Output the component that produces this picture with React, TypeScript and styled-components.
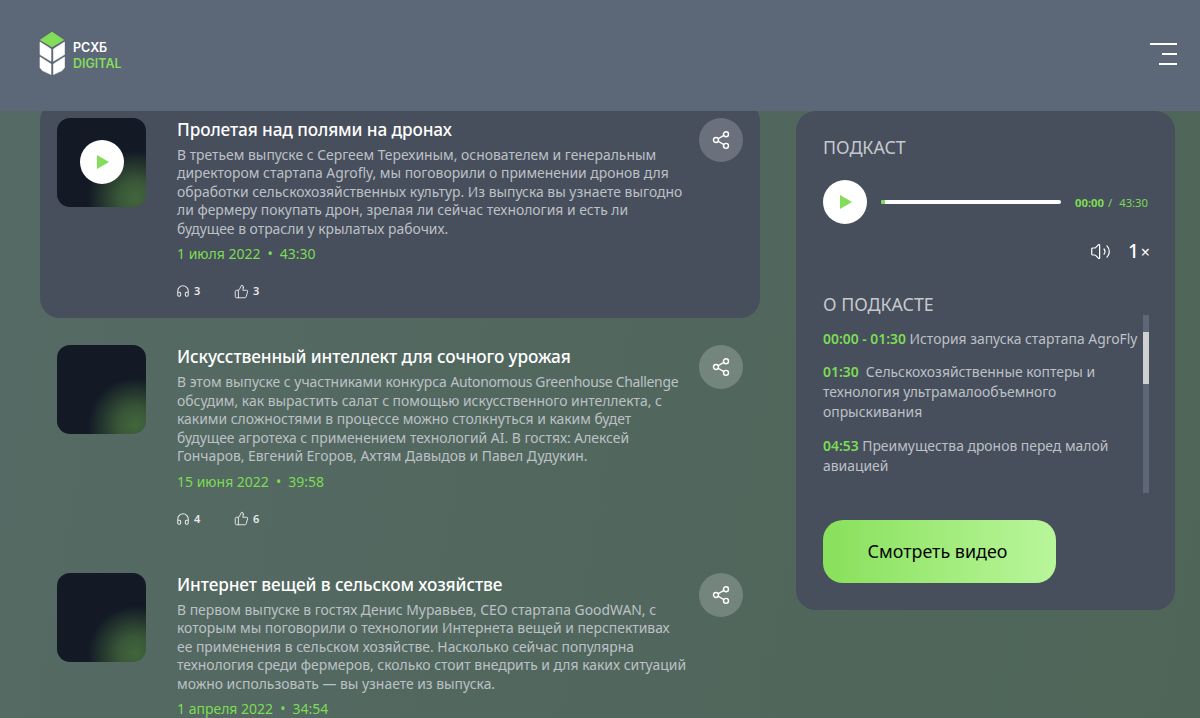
import React from "react";
import styled, { createGlobalStyle } from "styled-components";
import { Headphones, ThumbsUp, Share2, Volume2 } from "lucide-react";

const Global = createGlobalStyle`
  html, body { margin: 0; padding: 0; height: 718px; overflow: hidden; }
  body { font-family: "Noto Sans", "Open Sans", sans-serif; background: #4f665a; }
  * { box-sizing: border-box; }
`;

const Page = styled.div`
  position: relative;
  width: 1200px;
  height: 718px;
  overflow: hidden;
  background: linear-gradient(100deg, #556a64 0%, #4e6558 100%);
`;
const Header = styled.header`
  position: absolute;
  z-index: 5;
  top: 0;
  left: 0;
  right: 0;
  height: 111px;
  display: flex;
  align-items: center;
  justify-content: space-between;
  padding: 0 23px 0 39px;
  background: #5c6778;
`;
const Brand = styled.div`
  display: flex;
  align-items: center;
  gap: 7px;
  margin-top: -4px;
`;
const BrandText = styled.div`
  font-family: "Inter", sans-serif;
  font-size: 12.5px;
  font-weight: 600;
  line-height: 16px;
  color: #fff;
  display: flex;
  flex-direction: column;
  margin-top: 5px;
`;
const BrandAccent = styled.span`
  color: #84dd58;
`;
const Burger = styled.div`
  display: flex;
  flex-direction: column;
  align-items: flex-end;
  gap: 7.5px;
  margin-top: -3px;
`;
const BurgerLine = styled.span<{ $w: number }>`
  display: block;
  height: 2.5px;
  width: ${(p) => p.$w}px;
  background: #fff;
`;
const Main = styled.main`
  display: flex;
  align-items: flex-start;
  padding: 100.6px 25px 0 40px;
  gap: 36px;
`;
const Feed = styled.section`
  width: 720px;
  flex: none;
  display: flex;
  flex-direction: column;
  gap: 10.5px;
`;
const Card = styled.article<{ $active?: boolean }>`
  height: 217px;
  display: flex;
  padding: 17px 17px 0;
  border-radius: 20px;
  background: ${(p) => (p.$active ? "#474e5c" : "transparent")};
`;
const Thumb = styled.div`
  flex: none;
  width: 89px;
  height: 89px;
  border-radius: 13px;
  display: flex;
  align-items: center;
  justify-content: center;
  background:
    radial-gradient(circle at 88% 90%, #42663c 0%, rgba(66, 102, 60, 0.8) 15%, rgba(66, 102, 60, 0) 42%),
    #131a26;
`;
const PlayCircle = styled.button`
  width: 44px;
  height: 44px;
  flex: none;
  border: 0;
  padding: 0 0 0 2px;
  border-radius: 50%;
  background: #fff;
  display: flex;
  align-items: center;
  justify-content: center;
`;
const Body = styled.div`
  flex: none;
  width: 522px;
  margin-left: 31px;
  display: flex;
  flex-direction: column;
`;
const Title = styled.h2`
  margin: 0;
  font-size: 17.2px;
  line-height: 24px;
  font-weight: 500;
  color: #fff;
  white-space: nowrap;
  letter-spacing: -0.1px;
`;
const Desc = styled.p`
  margin: 4px 0 0;
  font-size: 13.9px;
  line-height: 18.5px;
  color: #bdc1c6;
`;
const DescLine = styled.span`
  display: block;
  white-space: nowrap;
`;
const Latin = styled.span`
  letter-spacing: -0.29px;
`;
const Meta = styled.div`
  margin-top: 6px;
  display: flex;
  gap: 7px;
  font-size: 14px;
  line-height: 20px;
  color: #7ddc55;
`;
const Stats = styled.div`
  margin: 19px 0 0 -1px;
  display: flex;
  gap: 21px;
`;
const Stat = styled.span`
  display: flex;
  align-items: center;
  gap: 4px;
  width: 37px;
  font-size: 11px;
  font-weight: 600;
  color: #e8e9eb;
  line-height: 16px;
`;
const ShareBtn = styled.button`
  flex: none;
  width: 44px;
  height: 44px;
  border: 0;
  padding: 0;
  border-radius: 50%;
  background: rgba(255, 255, 255, 0.2);
  display: flex;
  align-items: center;
  justify-content: center;
  color: #fff;
`;
const Side = styled.aside`
  width: 379px;
  height: 499px;
  flex: none;
  margin-top: 10.5px;
  padding: 24px 25px 0 27px;
  border-radius: 20px;
  background: #474e5c;
  display: flex;
  flex-direction: column;
`;
const SideTitle = styled.h3`
  margin: 0;
  font-size: 17.8px;
  line-height: 24px;
  font-weight: 400;
  color: #c6c9ce;
`;
const Player = styled.div`
  margin-top: 21px;
  display: flex;
  align-items: center;
`;
const Progress = styled.div`
  width: 180px;
  height: 4px;
  margin-left: 14px;
  border-radius: 2px;
  background: #fff;
  overflow: hidden;
`;
const ProgressFill = styled.div`
  width: 4px;
  height: 100%;
  background: #7ddc55;
`;
const Time = styled.div`
  margin-left: 14px;
  font-size: 11.3px;
  color: #7ddc55;
  white-space: nowrap;
  display: flex;
  gap: 4px;
`;
const TimeNow = styled.span`
  font-weight: 700;
`;
const Controls = styled.div`
  margin-top: 15px;
  height: 24px;
  display: flex;
  align-items: center;
  justify-content: flex-end;
  gap: 17px;
  color: #fff;
`;
const Speed = styled.span`
  font-size: 19px;
  font-weight: 500;
  line-height: 24px;
`;
const SpeedX = styled.span`
  font-size: 16px;
  font-weight: 400;
  margin-left: 2px;
`;
const AboutTitle = styled(SideTitle)`
  margin-top: 29px;
`;
const AboutWrap = styled.div`
  margin-top: -1px;
  height: 178px;
  display: flex;
  gap: 6px;
`;
const Chapters = styled.div`
  width: 314px;
  padding-top: 14px;
  display: flex;
  flex-direction: column;
  gap: 13.3px;
`;
const Chapter = styled.p`
  margin: 0;
  font-size: 13.9px;
  line-height: 20px;
  color: #bdc1c6;
  white-space: nowrap;
`;
const Stamp = styled.b`
  font-weight: 600;
  color: #7ddc55;
`;
const Track = styled.div`
  width: 6px;
  height: 178px;
  background: #5c6778;
`;
const TrackThumb = styled.div`
  width: 6px;
  height: 52px;
  margin-top: 17px;
  background: #cfd0d2;
`;
const Watch = styled.button`
  margin-top: 27px;
  width: 233px;
  height: 63px;
  border: 0;
  border-radius: 20px;
  background: linear-gradient(90deg, #88e05b 0%, #b9f69b 100%);
  color: #050505;
  font-family: inherit;
  font-size: 17.9px;
  font-weight: 400;
  padding: 0 4px 2px 0;
`;

const Play = () => (
  <svg width="14" height="16" viewBox="0 0 14 16">
    <path d="M1 1v14l12-7z" fill="#84dd58" />
  </svg>
);

const Logo = () => (
  <svg width="27" height="43" viewBox="0 0 27 43">
    <path d="M13 .3l11.5 7.6L13 14.8 1.5 7.9z" fill="#84dd58" stroke="#84dd58" strokeWidth="1" strokeLinejoin="round" />
    <path d="M1 10l11 7v12.2L1 22.6z" fill="#fff" stroke="#fff" strokeWidth=".6" strokeLinejoin="round" />
    <path d="M25.5 10l-11 7v12.2l11-6.6z" fill="#fff" stroke="#fff" strokeWidth=".6" strokeLinejoin="round" />
    <path d="M1 25l11 7v10.6l-8.6-4L1 35.5z" fill="#fff" stroke="#fff" strokeWidth=".6" strokeLinejoin="round" />
    <path d="M25.5 25l-11 7v10.6l8.6-4 2.4-3.1z" fill="#fff" stroke="#fff" strokeWidth=".6" strokeLinejoin="round" />
  </svg>
);

const episodes = [
  {
    title: "Пролетая над полями на дронах",
    lines: [
      "В третьем выпуске с Сергеем Терехиным, основателем и генеральным",
      "директором стартапа Agrofly, мы поговорили о применении дронов для",
      "обработки сельскохозяйственных культур. Из выпуска вы узнаете выгодно",
      "ли фермеру покупать дрон, зрелая ли сейчас технология и есть ли",
      "будущее в отрасли у крылатых рабочих.",
    ],
    date: "1 июля 2022",
    time: "43:30",
    listens: 3,
    likes: 3,
    active: true,
  },
  {
    title: "Искусственный интеллект для сочного урожая",
    lines: [
      <>
        В этом выпуске с участниками конкурса <Latin>Autonomous Greenhouse Challenge</Latin>
      </>,
      "обсудим, как вырастить салат с помощью искусственного интеллекта, с",
      "какими сложностями в процессе можно столкнуться и каким будет",
      "будущее агротеха с применением технологий AI. В гостях: Алексей",
      "Гончаров, Евгений Егоров, Ахтям Давыдов и Павел Дудукин.",
    ],
    date: "15 июня 2022",
    time: "39:58",
    listens: 4,
    likes: 6,
  },
  {
    title: "Интернет вещей в сельском хозяйстве",
    lines: [
      "В первом выпуске в гостях Денис Муравьев, CEO стартапа GoodWAN, с",
      "которым мы поговорили о технологии Интернета вещей и перспективах",
      "ее применения в сельском хозяйстве. Насколько сейчас популярна",
      "технология среди фермеров, сколько стоит внедрить и для каких ситуаций",
      "можно использовать — вы узнаете из выпуска.",
    ],
    date: "1 апреля 2022",
    time: "34:54",
    listens: 2,
    likes: 4,
  },
];

export default function App() {
  return (
    <Page>
      <Global />
      <Header>
        <Brand>
          <Logo />
          <BrandText>
            <span>РСХБ</span>
            <BrandAccent>DIGITAL</BrandAccent>
          </BrandText>
        </Brand>
        <Burger>
          <BurgerLine $w={27} />
          <BurgerLine $w={15} />
          <BurgerLine $w={18} />
        </Burger>
      </Header>
      <Main>
        <Feed>
          {episodes.map((e) => (
            <Card key={e.title} $active={e.active}>
              <Thumb>
                {e.active && (
                  <PlayCircle>
                    <Play />
                  </PlayCircle>
                )}
              </Thumb>
              <Body>
                <Title>{e.title}</Title>
                <Desc>
                  {e.lines.map((l, i) => (
                    <DescLine key={i}>{l}</DescLine>
                  ))}
                </Desc>
                <Meta>
                  <span>{e.date}</span>
                  <span>•</span>
                  <span>{e.time}</span>
                </Meta>
                <Stats>
                  <Stat>
                    <Headphones size={14} strokeWidth={1.8} />
                    {e.listens}
                  </Stat>
                  <Stat>
                    <ThumbsUp size={15} strokeWidth={1.5} />
                    {e.likes}
                  </Stat>
                </Stats>
              </Body>
              <ShareBtn>
                <Share2 size={20} strokeWidth={1.7} />
              </ShareBtn>
            </Card>
          ))}
        </Feed>
        <Side>
          <SideTitle>ПОДКАСТ</SideTitle>
          <Player>
            <PlayCircle>
              <Play />
            </PlayCircle>
            <Progress>
              <ProgressFill />
            </Progress>
            <Time>
              <TimeNow>00:00</TimeNow>
              <span>/</span>
              <span>&nbsp;43:30</span>
            </Time>
          </Player>
          <Controls>
            <Volume2 size={21} strokeWidth={1.4} />
            <Speed>
              1<SpeedX>×</SpeedX>
            </Speed>
          </Controls>
          <AboutTitle>О ПОДКАСТЕ</AboutTitle>
          <AboutWrap>
            <Chapters>
              <Chapter>
                <Stamp>00:00 - 01:30</Stamp> История запуска стартапа AgroFly
              </Chapter>
              <Chapter>
                <Stamp>01:30</Stamp>&nbsp; Сельскохозяйственные коптеры и
                <br />
                технология ультрамалообъемного
                <br />
                опрыскивания
              </Chapter>
              <Chapter>
                <Stamp>04:53</Stamp> Преимущества дронов перед малой
                <br />
                авиацией
              </Chapter>
            </Chapters>
            <Track>
              <TrackThumb />
            </Track>
          </AboutWrap>
          <Watch>Смотреть видео</Watch>
        </Side>
      </Main>
    </Page>
  );
}
